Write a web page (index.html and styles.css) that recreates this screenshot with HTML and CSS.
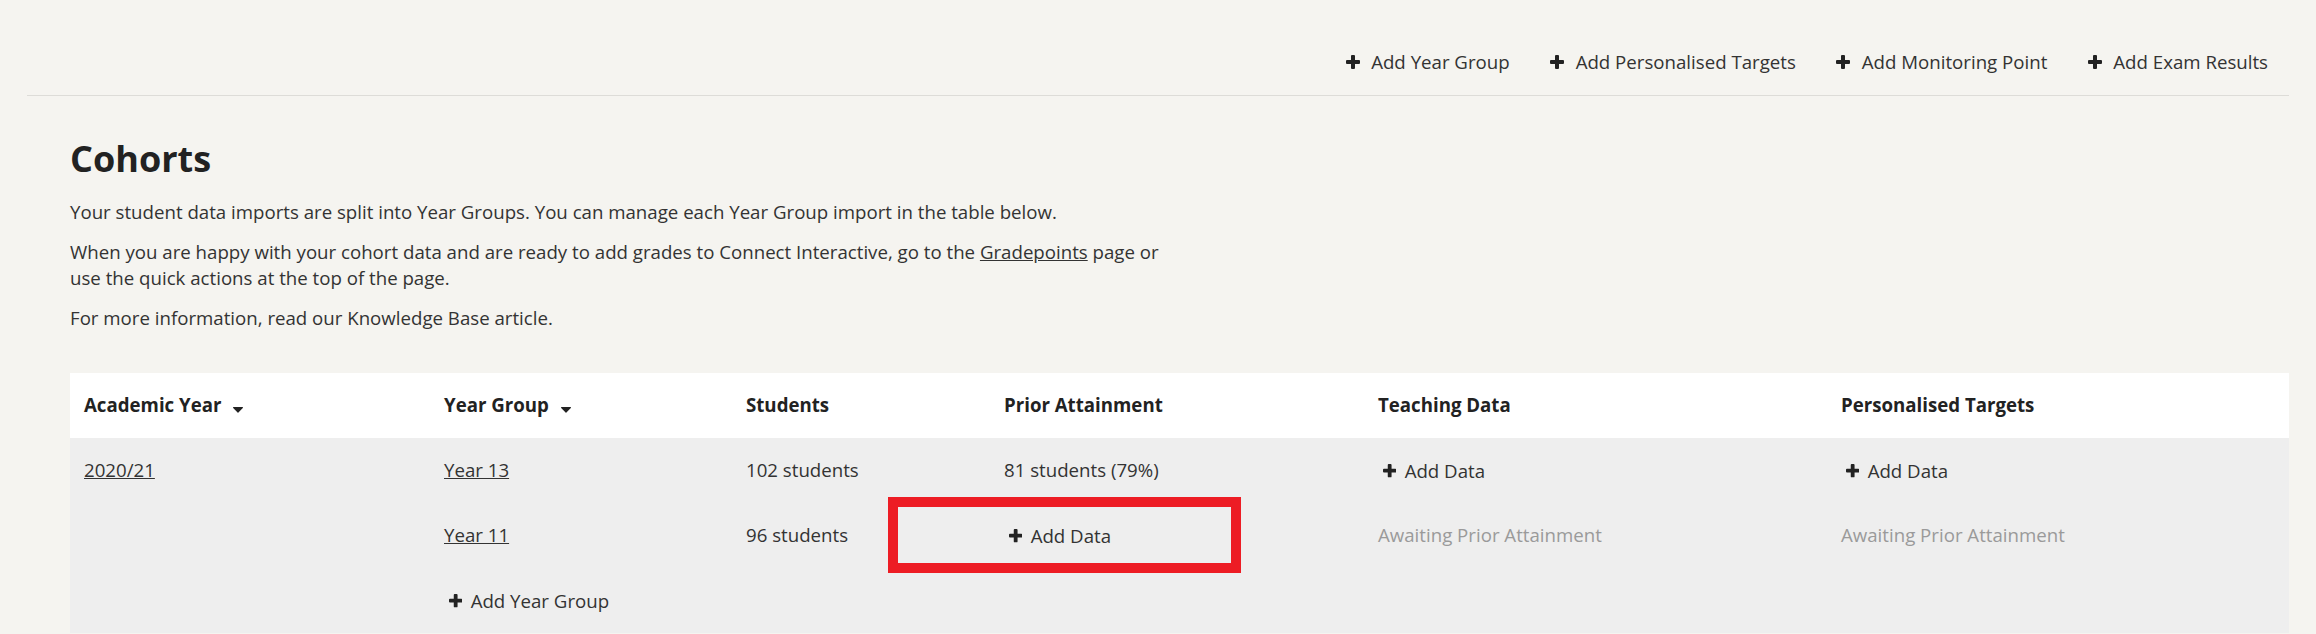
FILE: index.html
```html
<!DOCTYPE html>
<html lang="en">
<head>
<meta charset="utf-8">
<title>Cohorts</title>
<link rel="stylesheet" href="styles.css">
</head>
<body>
<header class="topbar">
  <nav class="actions">
    <a class="action" href="#"><svg class="plus plus-lg" viewBox="0 0 14 14"><path d="M6 0h2a1 1 0 0 1 1 1v4h4a1 1 0 0 1 1 1v2a1 1 0 0 1-1 1H9v4a1 1 0 0 1-1 1H6a1 1 0 0 1-1-1V9H1a1 1 0 0 1-1-1V6a1 1 0 0 1 1-1h4V1a1 1 0 0 1 1-1z"/></svg><span>Add Year Group</span></a>
    <a class="action" href="#"><svg class="plus plus-lg" viewBox="0 0 14 14"><path d="M6 0h2a1 1 0 0 1 1 1v4h4a1 1 0 0 1 1 1v2a1 1 0 0 1-1 1H9v4a1 1 0 0 1-1 1H6a1 1 0 0 1-1-1V9H1a1 1 0 0 1-1-1V6a1 1 0 0 1 1-1h4V1a1 1 0 0 1 1-1z"/></svg><span>Add Personalised Targets</span></a>
    <a class="action" href="#"><svg class="plus plus-lg" viewBox="0 0 14 14"><path d="M6 0h2a1 1 0 0 1 1 1v4h4a1 1 0 0 1 1 1v2a1 1 0 0 1-1 1H9v4a1 1 0 0 1-1 1H6a1 1 0 0 1-1-1V9H1a1 1 0 0 1-1-1V6a1 1 0 0 1 1-1h4V1a1 1 0 0 1 1-1z"/></svg><span>Add Monitoring Point</span></a>
    <a class="action" href="#"><svg class="plus plus-lg" viewBox="0 0 14 14"><path d="M6 0h2a1 1 0 0 1 1 1v4h4a1 1 0 0 1 1 1v2a1 1 0 0 1-1 1H9v4a1 1 0 0 1-1 1H6a1 1 0 0 1-1-1V9H1a1 1 0 0 1-1-1V6a1 1 0 0 1 1-1h4V1a1 1 0 0 1 1-1z"/></svg><span>Add Exam Results</span></a>
  </nav>
</header>
<main class="main">
  <h1 class="title">Cohorts</h1>
  <div class="intro">
    <p>Your student data imports are split into Year Groups. You can manage each Year Group import in the table below.</p>
    <p>When you are happy with your cohort data and are ready to add grades to Connect Interactive, go to the <a href="#">Gradepoints</a> page or use the quick actions at the top of the page.</p>
    <p>For more information, read our Knowledge Base article.</p>
  </div>
  <div class="table-wrap">
    <table class="cohorts">
      <colgroup>
        <col class="c1"><col class="c2"><col class="c3"><col class="c4"><col class="c5"><col class="c6">
      </colgroup>
      <thead>
        <tr>
          <th><span class="sort">Academic Year<svg class="caret" viewBox="0 0 10 6"><path d="M0.6 0h8.8a0.6 0.6 0 0 1 0.42 1.02L5.42 5.58a0.6 0.6 0 0 1-0.84 0L0.18 1.02A0.6 0.6 0 0 1 0.6 0z"/></svg></span></th>
          <th><span class="sort">Year Group<svg class="caret" viewBox="0 0 10 6"><path d="M0.6 0h8.8a0.6 0.6 0 0 1 0.42 1.02L5.42 5.58a0.6 0.6 0 0 1-0.84 0L0.18 1.02A0.6 0.6 0 0 1 0.6 0z"/></svg></span></th>
          <th>Students</th>
          <th>Prior Attainment</th>
          <th>Teaching Data</th>
          <th>Personalised Targets</th>
        </tr>
      </thead>
      <tbody>
        <tr>
          <td><a class="link" href="#">2020/21</a></td>
          <td><a class="link" href="#">Year 13</a></td>
          <td>102 students</td>
          <td>81 students (79%)</td>
          <td><a class="add" href="#"><svg class="plus plus-sm" viewBox="0 0 14 14"><path d="M6 0h2a1 1 0 0 1 1 1v4h4a1 1 0 0 1 1 1v2a1 1 0 0 1-1 1H9v4a1 1 0 0 1-1 1H6a1 1 0 0 1-1-1V9H1a1 1 0 0 1-1-1V6a1 1 0 0 1 1-1h4V1a1 1 0 0 1 1-1z"/></svg><span>Add Data</span></a></td>
          <td><a class="add" href="#"><svg class="plus plus-sm" viewBox="0 0 14 14"><path d="M6 0h2a1 1 0 0 1 1 1v4h4a1 1 0 0 1 1 1v2a1 1 0 0 1-1 1H9v4a1 1 0 0 1-1 1H6a1 1 0 0 1-1-1V9H1a1 1 0 0 1-1-1V6a1 1 0 0 1 1-1h4V1a1 1 0 0 1 1-1z"/></svg><span>Add Data</span></a></td>
        </tr>
        <tr>
          <td></td>
          <td><a class="link" href="#">Year 11</a></td>
          <td>96 students</td>
          <td><a class="add" href="#"><svg class="plus plus-sm" viewBox="0 0 14 14"><path d="M6 0h2a1 1 0 0 1 1 1v4h4a1 1 0 0 1 1 1v2a1 1 0 0 1-1 1H9v4a1 1 0 0 1-1 1H6a1 1 0 0 1-1-1V9H1a1 1 0 0 1-1-1V6a1 1 0 0 1 1-1h4V1a1 1 0 0 1 1-1z"/></svg><span>Add Data</span></a></td>
          <td class="muted">Awaiting Prior Attainment</td>
          <td class="muted">Awaiting Prior Attainment</td>
        </tr>
        <tr>
          <td></td>
          <td><a class="add" href="#"><svg class="plus plus-sm" viewBox="0 0 14 14"><path d="M6 0h2a1 1 0 0 1 1 1v4h4a1 1 0 0 1 1 1v2a1 1 0 0 1-1 1H9v4a1 1 0 0 1-1 1H6a1 1 0 0 1-1-1V9H1a1 1 0 0 1-1-1V6a1 1 0 0 1 1-1h4V1a1 1 0 0 1 1-1z"/></svg><span>Add Year Group</span></a></td>
          <td></td>
          <td></td>
          <td></td>
          <td></td>
        </tr>
      </tbody>
    </table>
    <div class="highlight"></div>
  </div>
</main>
</body>
</html>
```

FILE: styles.css
```css
html, body {
  margin: 0;
  padding: 0;
}

body {
  background: #f5f4f0;
  font-family: "Open Sans", "Noto Sans", sans-serif;
  font-size: 18.67px;
  line-height: 26.67px;
  color: #333333;
  overflow: hidden;
}

.topbar {
  margin: 0 27px;
  padding: 48.67px 21px 20px 0;
  border-bottom: 1px solid #dddcd8;
}

.actions {
  display: flex;
  justify-content: flex-end;
  gap: 40.5px;
}

.action {
  display: inline-flex;
  align-items: center;
  gap: 11.5px;
  color: #333333;
  text-decoration: none;
  white-space: nowrap;
}

.plus {
  display: block;
  fill: #222222;
  flex: none;
}

.plus-lg {
  width: 14px;
  height: 14px;
}

.plus-sm {
  width: 13.33px;
  height: 13.33px;
}

.main {
  padding: 0 27px 0 70px;
}

.title {
  margin: 37.2px 0 16.2px;
  font-size: 36px;
  line-height: 49px;
  font-weight: 700;
  color: #222222;
}

.intro {
  max-width: 1105px;
  display: flex;
  flex-direction: column;
  gap: 13.33px;
  margin-bottom: 40.7px;
}

.intro p {
  margin: 0;
}

.intro a {
  color: inherit;
  text-decoration: underline;
}

.table-wrap {
  position: relative;
}

.cohorts {
  width: 2219px;
  border-collapse: collapse;
  border-spacing: 0;
  table-layout: fixed;
}

.c1 { width: 360px; }
.c2 { width: 302px; }
.c3 { width: 258px; }
.c4 { width: 374px; }
.c5 { width: 463px; }
.c6 { width: 462px; }

.cohorts th {
  background: #ffffff;
  height: 65px;
  padding: 0 14px;
  text-align: left;
  font-weight: 700;
  color: #222222;
  white-space: nowrap;
}

.cohorts td {
  background: #eeeeee;
  height: 65px;
  padding: 0 14px;
  white-space: nowrap;
}

.sort {
  display: inline-flex;
  align-items: center;
}

.caret {
  width: 10px;
  height: 6px;
  margin: 10px 0 0 12px;
  fill: #222222;
  flex: none;
}

.link {
  color: #333333;
  text-decoration: underline;
}

.add {
  display: inline-flex;
  align-items: center;
  gap: 8.3px;
  margin-left: 5px;
  color: #333333;
  text-decoration: none;
  vertical-align: middle;
}

.muted {
  color: #9a9a9a;
}

.highlight {
  position: absolute;
  left: 818px;
  top: 124px;
  width: 353px;
  height: 76px;
  box-sizing: border-box;
  border: 10px solid #ed1c24;
  pointer-events: none;
}
```
